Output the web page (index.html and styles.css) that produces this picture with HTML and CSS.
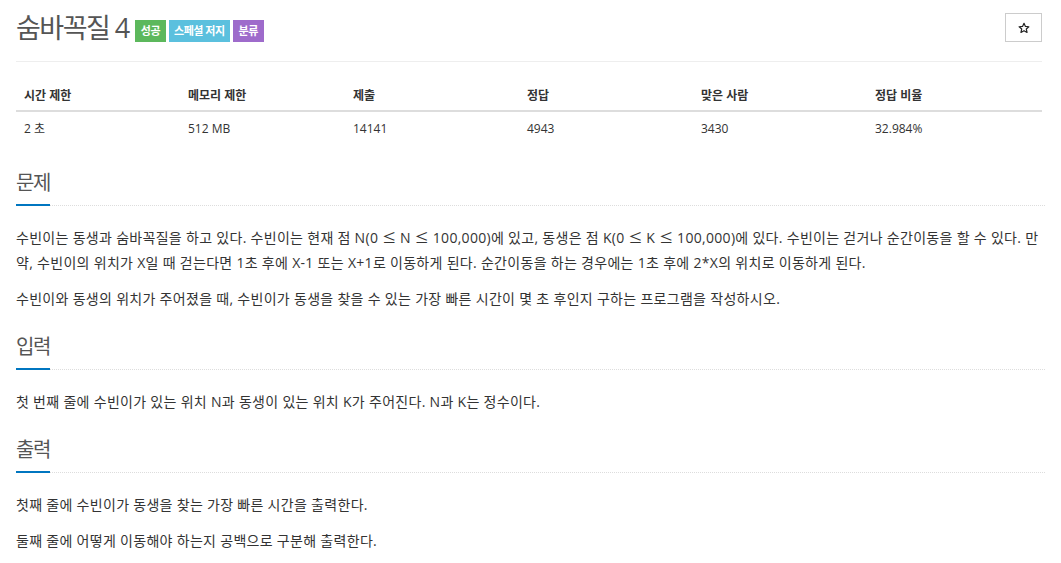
FILE: index.html
```html
<!DOCTYPE html>
<html lang="ko">
<head>
<meta charset="utf-8">
<title>숨바꼭질 4</title>
<link rel="stylesheet" href="styles.css">
</head>
<body>
<main class="page">
  <header class="page-header">
    <h1 class="title">
      <span class="title-text">숨바꼭질 4</span>
      <span class="badges">
        <span class="badge badge-green">성공</span>
        <span class="badge badge-cyan">스페셜 저지</span>
        <span class="badge badge-purple">분류</span>
      </span>
    </h1>
    <button class="star-btn" type="button" aria-label="즐겨찾기">
      <svg width="12" height="12" viewBox="0 0 24 24"><path d="M12 2.5l2.9 6.3 6.8.7-5.1 4.6 1.5 6.8L12 17.4l-6.1 3.5 1.5-6.8-5.1-4.6 6.8-.7z" fill="none" stroke="#222" stroke-width="2.4" stroke-linejoin="round"/></svg>
    </button>
  </header>

  <table class="info">
    <thead>
      <tr>
        <th class="c1">시간 제한</th>
        <th class="c2">메모리 제한</th>
        <th class="c3">제출</th>
        <th class="c4">정답</th>
        <th class="c5">맞은 사람</th>
        <th>정답 비율</th>
      </tr>
    </thead>
    <tbody>
      <tr>
        <td>2 초</td>
        <td>512 MB</td>
        <td>14141</td>
        <td>4943</td>
        <td>3430</td>
        <td>32.984%</td>
      </tr>
    </tbody>
  </table>

  <section class="section">
    <h2 class="section-title"><span>문제</span></h2>
    <div class="section-body">
      <p>수빈이는 동생과 숨바꼭질을 하고 있다. 수빈이는 현재 점 N(0 <span class="le">≤</span> N <span class="le">≤</span> 100,000)에 있고, 동생은 점 K(0 <span class="le">≤</span> K <span class="le">≤</span> 100,000)에 있다. 수빈이는 걷거나 순간이동을 할 수 있다. 만<span class="cont">약, 수빈이의 위치가 X일 때 걷는다면 1초 후에 X-1 또는 X+1로 이동하게 된다. 순간이동을 하는 경우에는 1초 후에 2*X의 위치로 이동하게 된다.</span></p>
      <p>수빈이와 동생의 위치가 주어졌을 때, 수빈이가 동생을 찾을 수 있는 가장 빠른 시간이 몇 초 후인지 구하는 프로그램을 작성하시오.</p>
    </div>
  </section>

  <section class="section">
    <h2 class="section-title"><span>입력</span></h2>
    <div class="section-body">
      <p>첫 번째 줄에 수빈이가 있는 위치 N과 동생이 있는 위치 K가 주어진다. N과 K는 정수이다.</p>
    </div>
  </section>

  <section class="section">
    <h2 class="section-title"><span>출력</span></h2>
    <div class="section-body">
      <p>첫째 줄에 수빈이가 동생을 찾는 가장 빠른 시간을 출력한다.</p>
      <p>둘째 줄에 어떻게 이동해야 하는지 공백으로 구분해 출력한다.</p>
    </div>
  </section>
</main>
</body>
</html>
```

FILE: styles.css
```css
* { box-sizing: border-box; }

html, body {
  margin: 0;
  padding: 0;
  background: #fff;
}

body {
  font-family: "Open Sans", "Noto Sans CJK KR", sans-serif;
  font-size: 14px;
  color: #333;
}

.page {
  padding: 0 16px;
  width: 1061px;
}

.page-header {
  display: flex;
  justify-content: space-between;
  align-items: flex-start;
  border-bottom: 1px solid #eee;
  height: 62px;
  padding-top: 13px;
  margin-right: 3px;
}

.title {
  margin: 0;
  display: flex;
  align-items: center;
  font-weight: 400;
  color: #555;
  font-size: 27px;
  line-height: 36px;
  margin-top: -3px;
}

.title-text {
  letter-spacing: -1.5px;
}

.badges {
  display: flex;
  gap: 3px;
  margin-left: 6px;
  margin-top: 6px;
}

.badge {
  display: inline-block;
  height: 22px;
  line-height: 22px;
  padding: 0 6px;
  color: #fff;
  font-size: 11px;
  font-weight: 700;
  letter-spacing: -0.5px;
}

.badge-green { background: #5cb85c; }
.badge-cyan { background: #5bc0de; padding: 0 5px; }
.badge-purple { background: #9e6bcb; }

.star-btn {
  width: 37px;
  height: 29px;
  border: 1px solid #ccc;
  background: #fff;
  display: flex;
  align-items: center;
  justify-content: center;
  padding: 0;
  margin: 0;
}

.info {
  width: 1026px;
  border-collapse: collapse;
  margin-top: 18px;
  margin-bottom: 7px;
  text-align: left;
}

.info th, .info td {
  padding: 0 8px;
  line-height: 20px;
  font-size: 12px;
}

.info th {
  font-weight: 700;
  color: #333;
  padding-top: 6px;
  padding-bottom: 4px;
  border-bottom: 2px solid #ddd;
}

.info td {
  padding-top: 7px;
  padding-bottom: 8px;
  color: #333;
}

.info .c1 { width: 164px; }
.info .c2 { width: 165px; }
.info .c3 { width: 174px; }
.info .c4 { width: 174px; }
.info .c5 { width: 174px; }

.section {
  margin-top: 22px;
}

.section-title {
  margin: 0;
  font-size: 20px;
  font-weight: 400;
  color: #555;
  line-height: 28px;
  border-bottom: 1px dotted #ddd;
  letter-spacing: -1.5px;
}

.section-title span {
  display: inline-block;
  padding-bottom: 7px;
  border-bottom: 2px solid #0076c0;
  margin-bottom: -1px;
}

.section-body {
  padding-top: 19px;
}

.section-body p {
  margin: 0 0 11px 0;
  line-height: 25px;
  font-size: 14px;
  letter-spacing: 0.3px;
  color: #333;
}

.le {
  font-family: "Noto Sans CJK KR", sans-serif;
  letter-spacing: 0;
}
```
